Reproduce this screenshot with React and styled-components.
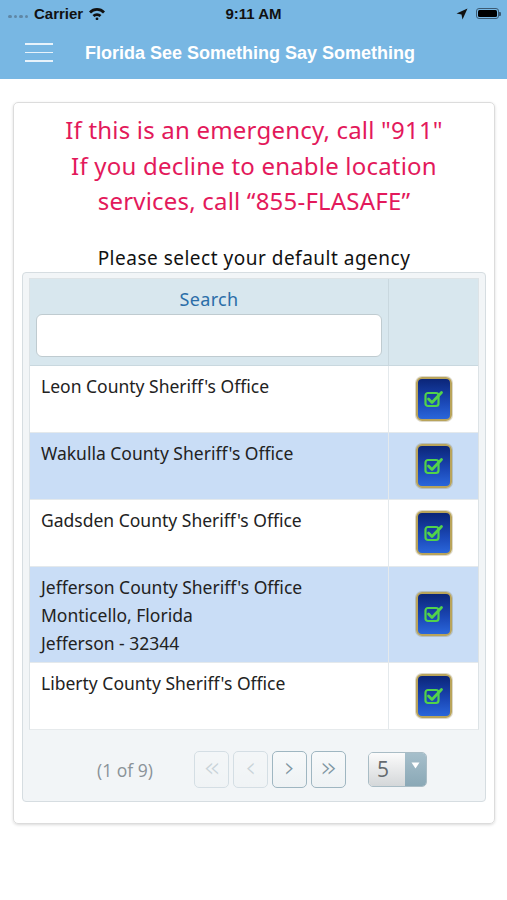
import React from "react";
import styled, { createGlobalStyle } from "styled-components";

const GlobalStyle = createGlobalStyle`
  body {
    margin: 0;
    background: #ffffff;
    font-family: "Noto Sans", "Open Sans", sans-serif;
  }
`;

const agencies = [
  { lines: ["Leon County Sheriff's Office"], shaded: false, tall: false },
  { lines: ["Wakulla County Sheriff's Office"], shaded: true, tall: false },
  { lines: ["Gadsden County Sheriff's Office"], shaded: false, tall: false },
  {
    lines: [
      "Jefferson County Sheriff's Office",
      "Monticello, Florida",
      "Jefferson - 32344",
    ],
    shaded: true,
    tall: true,
  },
  { lines: ["Liberty County Sheriff's Office"], shaded: false, tall: false },
];

function CheckIcon() {
  return (
    <CheckBadge>
      <svg width="20" height="18" viewBox="0 0 20 18">
        <rect
          x="1.5"
          y="3"
          width="13"
          height="13"
          rx="2.5"
          fill="none"
          stroke="#52d34a"
          strokeWidth="2.2"
        />
        <path
          d="M4.5 9 L8 12.5 L17.5 2.5"
          fill="none"
          stroke="#52d34a"
          strokeWidth="2.8"
          strokeLinecap="round"
          strokeLinejoin="round"
        />
      </svg>
    </CheckBadge>
  );
}

function App() {
  return (
    <Screen>
      <GlobalStyle />
      <TopBar>
        <StatusBar>
          <Carrier>
            <Dots>
              <i />
              <i />
              <i />
              <i />
            </Dots>
            Carrier
            <svg width="18" height="13" viewBox="0 0 18 13">
              <path d="M1 4.5 A11 11 0 0 1 17 4.5 L15 6.5 A8 8 0 0 0 3 6.5 Z" fill="#111" />
              <path d="M4.5 8 A6.5 6.5 0 0 1 13.5 8 L11.6 10 A4 4 0 0 0 6.4 10 Z" fill="#111" />
              <circle cx="9" cy="11.8" r="1.4" fill="#111" />
            </svg>
          </Carrier>
          <Clock>9:11 AM</Clock>
          <StatusRight>
            <svg width="12" height="12" viewBox="0 0 12 12">
              <path d="M11.5 0.5 L0.5 5.5 L5.5 6.5 L6.5 11.5 Z" fill="#111" />
            </svg>
            <Battery>
              <BatteryFill />
            </Battery>
          </StatusRight>
        </StatusBar>
        <NavBar>
          <Hamburger>
            <span />
            <span />
            <span />
          </Hamburger>
          <NavTitle>Florida See Something Say Something</NavTitle>
        </NavBar>
      </TopBar>

      <Card>
        <Warning>
          If this is an emergency, call "911"
          <br />
          If you decline to enable location
          <br />
          services, call “855-FLASAFE”
        </Warning>
        <Prompt>Please select your default agency</Prompt>

        <TableBox>
          <Table>
            <HeaderRow>
              <SearchCell>
                <SearchLabel>Search</SearchLabel>
                <SearchInput type="text" />
              </SearchCell>
              <BlankCell />
            </HeaderRow>
            {agencies.map((a) => (
              <Row key={a.lines[0]} $shaded={a.shaded} $tall={a.tall}>
                <NameCell>
                  {a.lines.map((l) => (
                    <div key={l}>{l}</div>
                  ))}
                </NameCell>
                <IconCell>
                  <CheckIcon />
                </IconCell>
              </Row>
            ))}
          </Table>
          <Pager>
            <PageInfo>(1 of 9)</PageInfo>
            <PagerButtons>
              <PageButton $disabled>«</PageButton>
              <PageButton $disabled>‹</PageButton>
              <PageButton>›</PageButton>
              <PageButton>»</PageButton>
            </PagerButtons>
            <RowsSelect>
              <RowsValue>5</RowsValue>
              <RowsArrow>
                <svg width="9" height="7" viewBox="0 0 9 7">
                  <path d="M0.5 0.5 L8.5 0.5 L4.5 6.5 Z" fill="#fff" />
                </svg>
              </RowsArrow>
            </RowsSelect>
          </Pager>
        </TableBox>
      </Card>
    </Screen>
  );
}

export default App;

const Screen = styled.div`
  width: 507px;
  height: 900px;
  background: #fff;
  overflow: hidden;
`;

const TopBar = styled.div`
  background: #78b7e3;
  height: 79px;
`;

const StatusBar = styled.div`
  height: 27px;
  display: flex;
  align-items: center;
  justify-content: space-between;
  padding: 0 8px 0 8px;
  font-family: "Liberation Sans", Arial, sans-serif;
  font-weight: bold;
  font-size: 15px;
  color: #111;
  position: relative;
`;

const Carrier = styled.div`
  display: flex;
  align-items: center;
  gap: 5px;
`;

const Dots = styled.span`
  display: flex;
  gap: 2px;
  margin-top: 6px;
  margin-right: 1px;
  i {
    display: block;
    width: 3.5px;
    height: 3.5px;
    border-radius: 50%;
    background: #5f87a6;
  }
`;

const Clock = styled.div`
  position: absolute;
  left: 0;
  right: 0;
  text-align: center;
  pointer-events: none;
`;

const StatusRight = styled.div`
  display: flex;
  align-items: center;
  gap: 8px;
`;

const Battery = styled.div`
  width: 23px;
  height: 11px;
  border: 1px solid #3b5a73;
  border-radius: 3px;
  padding: 1px;
  box-sizing: border-box;
  position: relative;
  &::after {
    content: "";
    position: absolute;
    right: -3px;
    top: 3px;
    width: 2px;
    height: 4px;
    background: #3b5a73;
    border-radius: 0 1px 1px 0;
  }
`;

const BatteryFill = styled.div`
  width: 100%;
  height: 100%;
  background: #000;
  border-radius: 1.5px;
`;

const NavBar = styled.div`
  height: 52px;
  display: flex;
  align-items: center;
  padding-left: 25px;
`;

const Hamburger = styled.div`
  width: 28px;
  display: flex;
  flex-direction: column;
  gap: 7px;
  margin-top: -1px;
  span {
    display: block;
    height: 1.5px;
    background: #e8f3fb;
  }
`;

const NavTitle = styled.div`
  margin-left: 32px;
  font-family: "Liberation Sans", Arial, sans-serif;
  font-weight: bold;
  font-size: 18px;
  color: #fff;
`;

const Card = styled.div`
  margin: 23px 12px 0 13px;
  height: 722px;
  box-sizing: border-box;
  border: 1px solid #dcdcdc;
  border-radius: 5px;
  box-shadow: 0 1px 3px rgba(0, 0, 0, 0.15);
  padding: 9px 8px 0 8px;
`;

const Warning = styled.div`
  text-align: center;
  color: #e3195b;
  font-size: 24px;
  letter-spacing: 0.2px;
  line-height: 35.5px;
`;

const Prompt = styled.div`
  text-align: center;
  color: #111;
  font-size: 19px;
  letter-spacing: 0.5px;
  margin-top: 27px;
  line-height: 24px;
`;

const TableBox = styled.div`
  margin-top: 2px;
  border: 1px solid #d6dde1;
  border-radius: 4px;
  background: #f2f5f7;
  padding: 5px 6px 0 6px;
  height: 530px;
  box-sizing: border-box;
`;

const Table = styled.div`
  border: 1px solid #dde3e6;
  border-bottom: 1px solid #e6eaec;
`;

const HeaderRow = styled.div`
  display: grid;
  grid-template-columns: 1fr 89px;
  background: #d8e7ee;
  border-bottom: 1px solid #c9d8df;
  height: 86px;
`;

const SearchCell = styled.div`
  display: flex;
  flex-direction: column;
  align-items: stretch;
  padding: 8px 6px 0 6px;
  border-right: 1px solid #c9d8df;
`;

const SearchLabel = styled.div`
  text-align: center;
  color: #2b6ea8;
  font-size: 18px;
  letter-spacing: 0.3px;
  line-height: 24px;
  margin-bottom: 3px;
`;

const SearchInput = styled.input`
  height: 43px;
  box-sizing: border-box;
  border: 1px solid #bfcbd0;
  border-radius: 6px;
  background: #fff;
  outline: none;
`;

const BlankCell = styled.div``;

const Row = styled.div`
  display: grid;
  grid-template-columns: 1fr 89px;
  background: ${(p) => (p.$shaded ? "#c9ddf6" : "#ffffff")};
  height: ${(p) => (p.$tall ? "95px" : "66px")};
  border-bottom: 1px solid #e4e9ec;
  &:last-child {
    border-bottom: none;
  }
`;

const NameCell = styled.div`
  padding: 6px 11px 0 11px;
  font-size: 17.5px;
  line-height: 28px;
  color: #222;
  border-right: 1px solid #e4e9ec;
`;

const IconCell = styled.div`
  display: flex;
  align-items: center;
  justify-content: center;
`;

const CheckBadge = styled.div`
  width: 36px;
  height: 44px;
  box-sizing: border-box;
  border: 2px solid #b9a45b;
  border-radius: 6px;
  background: linear-gradient(#0b2578 0%, #1b49b8 60%, #2a66da 100%);
  display: flex;
  align-items: center;
  justify-content: center;
  box-shadow: 0 0 0 1px rgba(120, 100, 40, 0.25);
`;

const Pager = styled.div`
  display: flex;
  align-items: center;
  height: 76px;
  padding-top: 4px;
  box-sizing: border-box;
  padding-left: 68px;
`;

const PageInfo = styled.div`
  font-family: "Open Sans", sans-serif;
  color: #8a9297;
  font-size: 17.5px;
  width: 97px;
`;

const PagerButtons = styled.div`
  display: flex;
  gap: 4px;
`;

const PageButton = styled.div`
  width: 35px;
  height: 37px;
  box-sizing: border-box;
  border: 1px solid #9fb6c1;
  border-radius: 5px;
  background: linear-gradient(#f7f9fa, #eef2f4);
  color: #7f96a2;
  font-size: 28px;
  line-height: 32px;
  text-align: center;
  font-family: "DejaVu Sans", sans-serif;
  font-weight: 200;
  opacity: ${(p) => (p.$disabled ? 0.35 : 1)};
`;

const RowsSelect = styled.div`
  margin-left: 22px;
  display: flex;
  height: 35px;
  width: 59px;
  border: 1px solid #a9bcc5;
  border-radius: 5px;
  overflow: hidden;
  box-sizing: border-box;
`;

const RowsValue = styled.div`
  flex: 1;
  background: linear-gradient(#fbfbfb, #d4d7d9);
  color: #646a6e;
  font-family: "Open Sans", sans-serif;
  font-size: 21px;
  line-height: 33px;
  padding-left: 8px;
`;

const RowsArrow = styled.div`
  width: 21px;
  background: linear-gradient(#a6bfcb, #8aa8b6);
  display: flex;
  justify-content: center;
  padding-top: 9px;
  box-sizing: border-box;
`;
